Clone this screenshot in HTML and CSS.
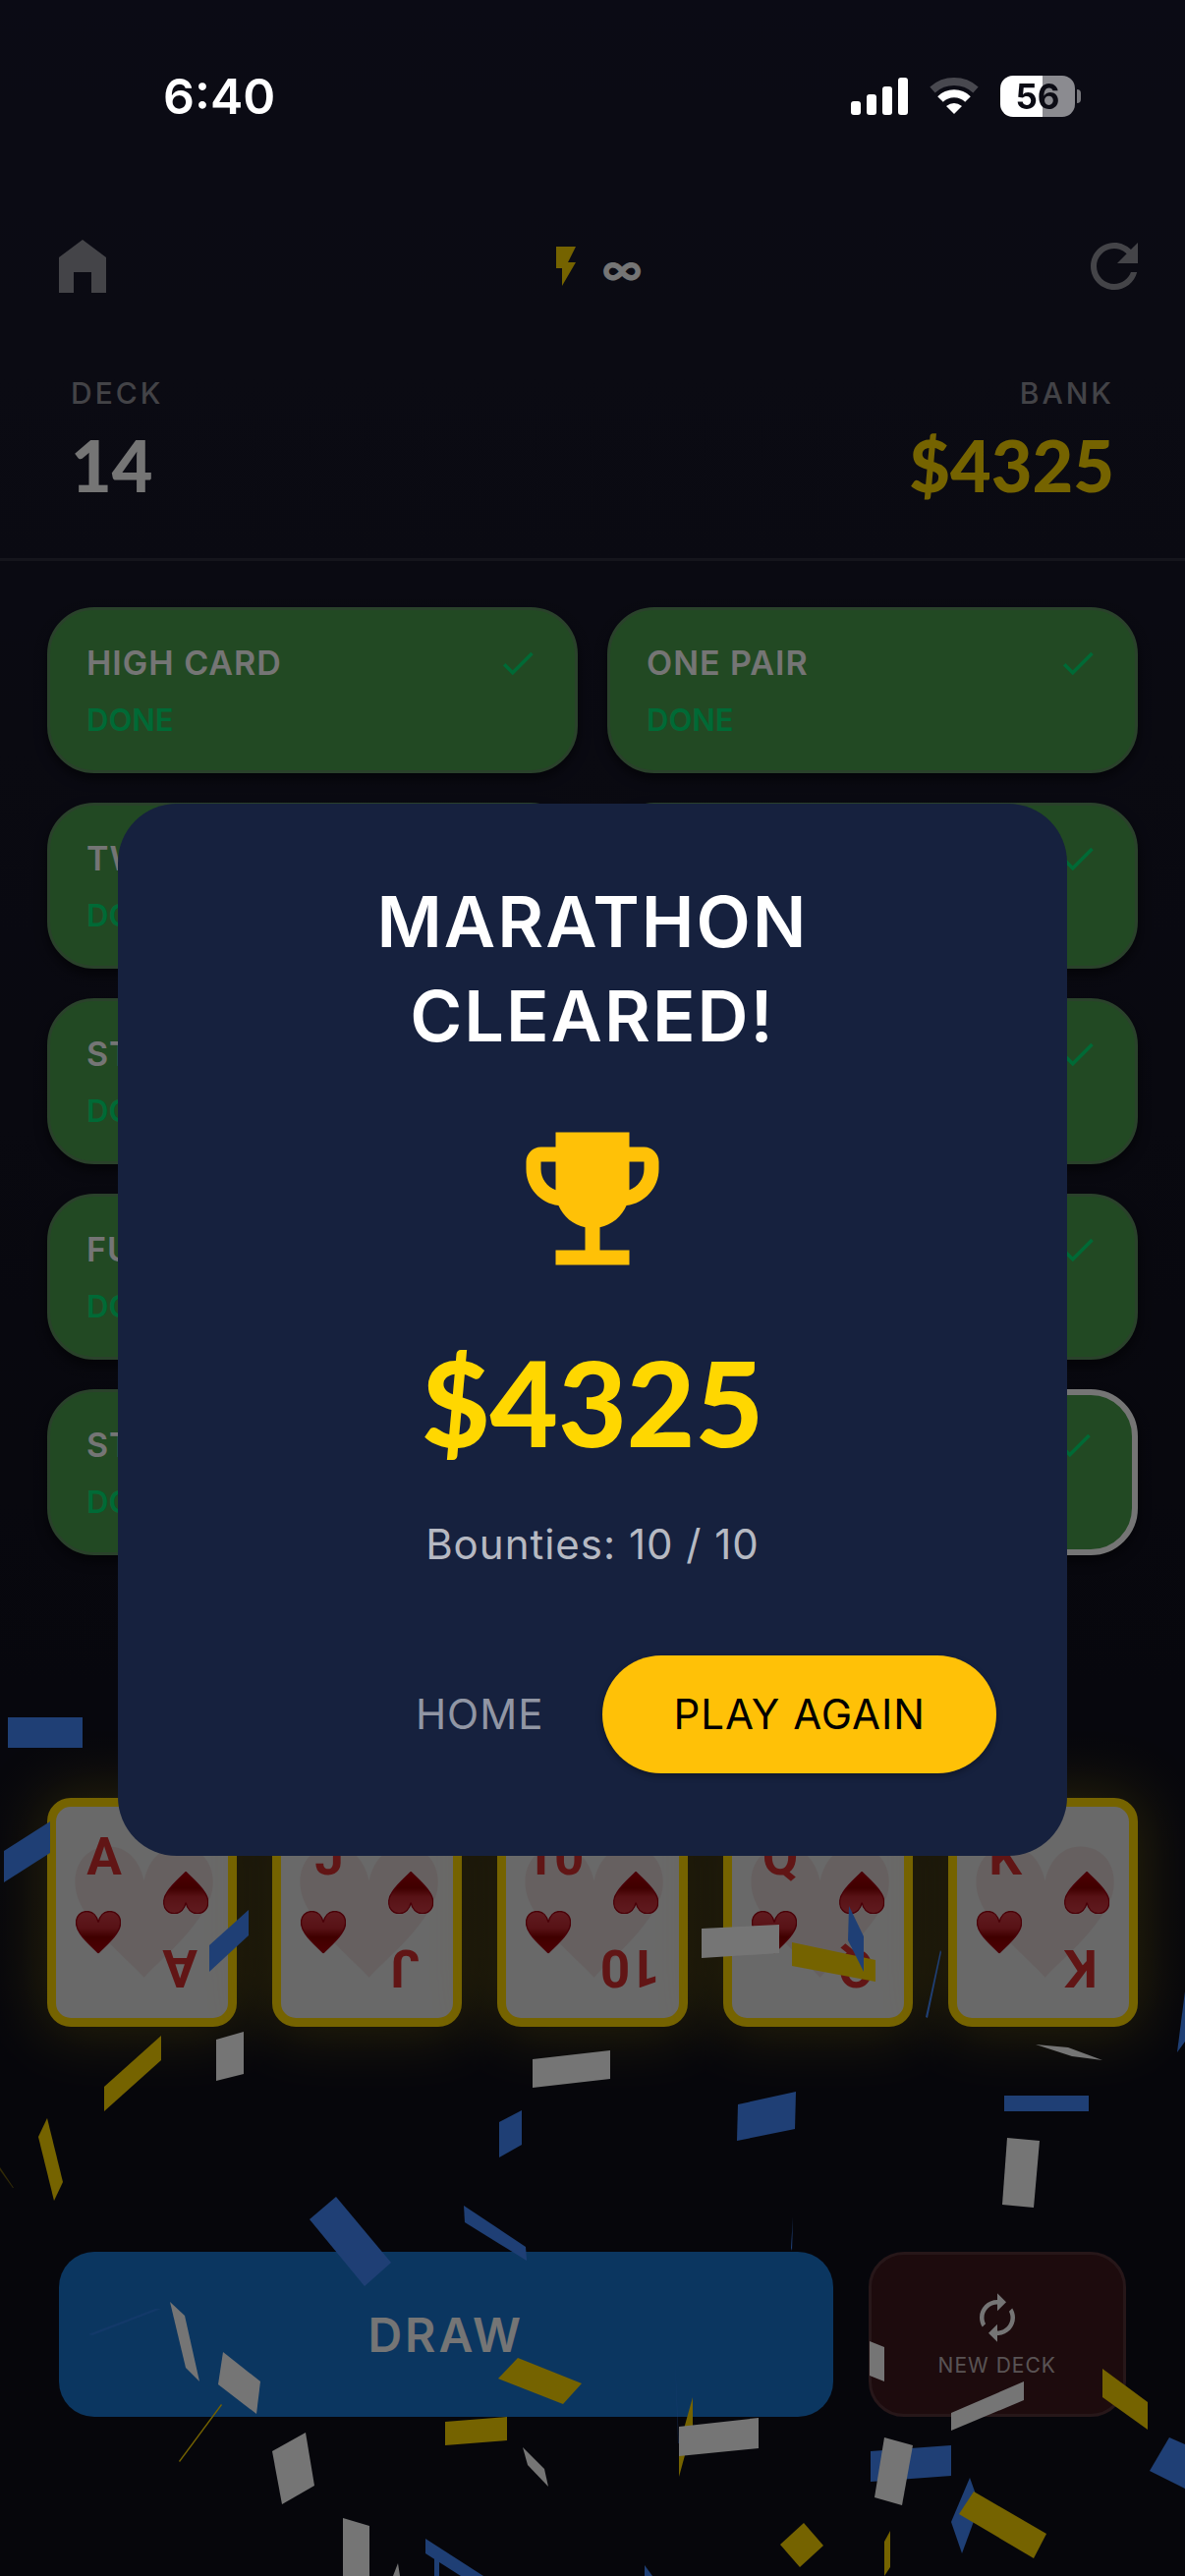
FILE: index.html
```html
<!DOCTYPE html>
<html lang="en">
<head>
    <meta charset="UTF-8">
    <meta name="viewport" content="width=device-width, initial-scale=1.0">
    <title>Poker Marathon</title>
    <link rel="stylesheet" href="styles.css">
</head>
<body>
    <!-- shared shapes -->
    <svg class="defs" width="0" height="0" aria-hidden="true">
        <defs>
            <linearGradient id="heartFill" x1="0" y1="0" x2="0" y2="1">
                <stop offset="0" stop-color="#d23c46"/>
                <stop offset="0.4" stop-color="#c02830"/>
                <stop offset="0.62" stop-color="#8c0000"/>
                <stop offset="1" stop-color="#a80008"/>
            </linearGradient>
            <symbol id="heart" viewBox="0 0 100 94" preserveAspectRatio="none">
                <path d="M50 93C40 82 22 68 10 50C3 40 1 33 1 26C1 11 11 1 25 1C38 1 47 11 50 25C53 11 62 1 75 1C89 1 99 11 99 26C99 33 97 40 90 50C78 68 60 82 50 93z"/>
            </symbol>
            <symbol id="check" viewBox="0 0 24 24">
                <path d="M9 16.17L4.83 12l-1.42 1.41L9 19 21 7l-1.41-1.41z"/>
            </symbol>
        </defs>
    </svg>

    <div class="status-bar">
        <span class="time">6:40</span>
        <div class="status-icons">
            <svg width="58" height="38" viewBox="0 0 58 38">
                <rect x="0" y="24" width="10" height="14" rx="3"/>
                <rect x="16" y="17" width="10" height="21" rx="3"/>
                <rect x="32" y="9" width="10" height="29" rx="3"/>
                <rect x="48" y="0" width="10" height="38" rx="3"/>
            </svg>
            <svg class="wifi" width="50" height="38" viewBox="0 0 50 38">
                <path class="wifi-weak" d="M3 12.500A33 33 0 0 1 47 12.500"/>
                <path d="M11 22A20 20 0 0 1 39 22"/>
                <path class="wifi-dot" d="M17 29Q25 23 33 29L25 37z"/>
            </svg>
            <div class="battery"><span class="battery-level">56</span></div>
        </div>
    </div>

    <div class="game">
        <header class="top-bar">
            <button class="icon-btn" aria-label="Home">
                <svg width="72" height="72" viewBox="0 0 24 24"><path d="M12 3L4 9v12h5v-7h6v7h5V9z"/></svg>
            </button>
            <div class="energy">
                <svg width="48" height="48" viewBox="0 0 24 24"><path d="M7 2v11h3v9l7-12h-4l4-8z"/></svg>
                <span>∞</span>
            </div>
            <button class="icon-btn" aria-label="Restart">
                <svg width="72" height="72" viewBox="0 0 24 24"><path d="M17.650 6.350C16.200 4.900 14.210 4 12 4c-4.420 0-7.990 3.580-7.990 8s3.570 8 7.990 8c3.730 0 6.840-2.550 7.730-6h-2.080c-.82 2.330-3.040 4-5.650 4-3.310 0-6-2.690-6-6s2.690-6 6-6c1.660 0 3.140.69 4.220 1.780L13 11h7V4l-2.350 2.350z"/></svg>
            </button>
        </header>

        <section class="stats">
            <div class="stat">
                <span class="stat-label">DECK</span>
                <span class="stat-value">14</span>
            </div>
            <div class="stat stat-right">
                <span class="stat-label">BANK</span>
                <span class="stat-value gold">$4325</span>
            </div>
        </section>

        <section class="bounties">
            <div class="bounty"><div class="bounty-top"><span>HIGH CARD</span><svg><use href="#check"/></svg></div><span class="done">DONE</span></div>
            <div class="bounty"><div class="bounty-top"><span>ONE PAIR</span><svg><use href="#check"/></svg></div><span class="done">DONE</span></div>
            <div class="bounty"><div class="bounty-top"><span>TWO PAIR</span><svg><use href="#check"/></svg></div><span class="done">DONE</span></div>
            <div class="bounty"><div class="bounty-top"><span></span><svg><use href="#check"/></svg></div><span class="done"></span></div>
            <div class="bounty"><div class="bounty-top"><span>STRAIGHT</span><svg><use href="#check"/></svg></div><span class="done">DONE</span></div>
            <div class="bounty"><div class="bounty-top"><span></span><svg><use href="#check"/></svg></div><span class="done"></span></div>
            <div class="bounty"><div class="bounty-top"><span>FULL HOUSE</span><svg><use href="#check"/></svg></div><span class="done">DONE</span></div>
            <div class="bounty"><div class="bounty-top"><span></span><svg><use href="#check"/></svg></div><span class="done"></span></div>
            <div class="bounty"><div class="bounty-top"><span>STR. FLUSH</span><svg><use href="#check"/></svg></div><span class="done">DONE</span></div>
            <div class="bounty current"><div class="bounty-top"><span></span><svg><use href="#check"/></svg></div><span class="done"></span></div>
        </section>

        <section class="table-area">
            <div class="hand" id="hand"></div>
        </section>

        <div class="actions">
            <button class="draw-btn">DRAW</button>
            <button class="deck-btn">
                <svg width="54" height="54" viewBox="0 0 24 24"><path d="M12 6v3l4-4-4-4v3c-4.420 0-8 3.580-8 8 0 1.570.46 3.030 1.240 4.260L6.700 14.800c-.45-.83-.7-1.790-.7-2.800 0-3.310 2.690-6 6-6zm6.760 1.740L17.300 9.200c.44.84.7 1.790.7 2.800 0 3.310-2.690 6-6 6v-3l-4 4 4 4v-3c4.420 0 8-3.580 8-8 0-1.570-.46-3.030-1.240-4.260z"/></svg>
                <span>NEW DECK</span>
            </button>
        </div>

        <!-- confetti -->
        <svg class="confetti" viewBox="0 0 1206 2622" preserveAspectRatio="xMidYMax slice" aria-hidden="true">
            <g class="blue">
                <path d="M8 1748H84V1779H8z"/>
                <path d="M4 1884L51 1854V1886L4 1916z"/>
                <path d="M213 1980L253 1944V1970L213 2007z"/>
                <path d="M508 2160L531 2148V2183L508 2196z"/>
                <path d="M342 2236L398 2303L371 2327L315 2259z"/>
                <path d="M472 2245L535 2287L536 2301L473 2262z"/>
                <path d="M433 2584L492 2622H469L433 2599z"/>
                <path d="M442 2603H447V2622H442z"/>
                <path d="M656 2611L664 2622H656z"/>
                <path d="M886 2495L968 2489V2520L886 2526z"/>
                <path d="M1190 2481L1206 2488V2533L1170 2515z"/>
                <path d="M987 2522L997 2550L979 2599L968 2567z"/>
                <path d="M957 1985L958 1987L944 2054L942 2053z"/>
                <path d="M751 2142L810 2129L809 2167L750 2179z"/>
                <path d="M1022 2133H1108V2149H1022z"/>
                <path d="M1206 2027L1198 2089L1206 2078z"/>
                <path d="M807 2257L806 2291L805 2288z"/>
                <path class="faint" d="M90 2376L158 2350H164L94 2377z"/>
                <path class="faint" d="M687 2400L691 2487L690 2487z"/>
            </g>
            <g class="yellow">
                <path d="M106 2124L164 2072V2097L106 2149z"/>
                <path d="M39 2175L48 2156L64 2221L55 2240z"/>
                <path d="M225 2447L226 2448L183 2506L182 2505z"/>
                <path d="M527 2400L592 2426L573 2447L507 2421z"/>
                <path d="M453 2465L516 2460V2484L453 2489z"/>
                <path d="M1122 2411L1168 2445V2473L1122 2440z"/>
                <path d="M705 2440V2470L691 2521V2490z"/>
                <path d="M806 1977L891 1995V2017L806 2001z"/>
                <path d="M991 2536L1065 2579L1052 2604L976 2559z"/>
                <path d="M818 2568L838 2591L814 2613L794 2590z"/>
                <path d="M906 2576V2613L900 2622V2587z"/>
                <path class="faint" d="M0 2206L14 2227L13 2227L0 2209z"/>
            </g>
            <path class="blue" d="M864 1940L879 1971V2007L863 1975z"/>
            <g class="white">
                <path d="M220 2076L248 2068V2111L220 2118z"/>
                <path d="M542 2096L621 2087V2116L542 2125z"/>
                <path d="M173 2343L188 2357L203 2424L189 2410z"/>
                <path d="M227 2394L265 2424L261 2457L222 2427z"/>
                <path d="M277 2495L311 2476L320 2530L287 2549z"/>
                <path d="M532 2491L554 2513L558 2531L537 2509z"/>
                <path d="M349 2563L376 2571V2622H349z"/>
                <path d="M405 2609L400 2622H407z"/>
                <path d="M1025 2176L1058 2179L1052 2247L1020 2244z"/>
                <path d="M885 2383L900 2389V2424L885 2418z"/>
                <path d="M968 2456L1042 2424V2443L968 2474z"/>
                <path d="M691 2470L772 2461V2492L691 2500z"/>
                <path d="M900 2481L929 2489L918 2550L890 2542z"/>
                <path d="M714 1963L793 1959V1988L714 1993z"/>
                <path d="M1054 2081L1087 2084L1122 2097L1091 2093z"/>
            </g>
        </svg>
    </div>

    <div class="backdrop">
        <div class="dialog" role="dialog" aria-labelledby="dialogTitle">
            <h1 id="dialogTitle">MARATHON<br>CLEARED!</h1>
            <svg class="trophy" width="180" height="180" viewBox="0 0 24 24"><path d="M19 5h-2V3H7v2H5c-1.100 0-2 .9-2 2v1c0 2.550 1.920 4.630 4.390 4.940.63 1.500 1.980 2.630 3.610 2.960V19H7v2h10v-2h-4v-3.100c1.630-.33 2.980-1.460 3.610-2.960C19.080 12.630 21 10.550 21 8V7c0-1.100-.9-2-2-2zM5 8V7h2v3.820C5.840 10.400 5 9.300 5 8zm14 0c0 1.300-.84 2.400-2 2.820V7h2v1z"/></svg>
            <p class="amount">$4325</p>
            <p class="summary">Bounties: 10 / 10</p>
            <div class="dialog-actions">
                <button class="home-btn">HOME</button>
                <button class="play-btn">PLAY AGAIN</button>
            </div>
        </div>
    </div>

    <script src="script.js"></script>
</body>
</html>
```

FILE: styles.css
```css
* {
    box-sizing: border-box;
}
body {
    margin: 0;
    background: #0f0f1a;
    color: #fff;
    font-family: Inter, "Open Sans", sans-serif;
}
button {
    border: none;
    margin: 0;
    padding: 0;
    background: none;
    color: inherit;
    font-family: inherit;
    cursor: pointer;
}
svg {
    display: block;
    fill: currentColor;
}
.defs {
    position: absolute;
}

/* status bar stays above the backdrop */
.status-bar {
    position: absolute;
    top: 0;
    left: 0;
    right: 0;
    z-index: 20;
    display: flex;
    justify-content: space-between;
    align-items: center;
    height: 196px;
    padding: 0 112px 0 166px;
}
.time {
    font-size: 50px;
    font-weight: 600;
}
.status-icons {
    display: flex;
    align-items: center;
    gap: 22px;
}
.wifi {
    fill: none;
    stroke: #fff;
    stroke-width: 8px;
}
.wifi-weak {
    opacity: 0.25;
}
.wifi-dot {
    fill: #fff;
    stroke: none;
}
.battery {
    position: relative;
    width: 76px;
    height: 42px;
    border-radius: 13px;
    background: linear-gradient(90deg, #fff 56%, #8b8b90 56%);
    color: #0b0b14;
    text-align: center;
}
.battery::after {
    content: "";
    position: absolute;
    left: 78px;
    top: 14px;
    width: 4px;
    height: 14px;
    border-radius: 0 4px 4px 0;
    background: #77777c;
}
.battery-level {
    font-size: 35px;
    line-height: 42px;
    font-weight: 700;
}

.game {
    position: relative;
    display: flex;
    flex-direction: column;
    min-height: 100vh;
    padding: 186px 0 162px;
    overflow: hidden;
    background: linear-gradient(#1a1a2e, #0f0f1a 80%);
}

.top-bar {
    display: flex;
    justify-content: space-between;
    align-items: center;
    height: 170px;
    padding: 0 0 0 12px;
}
.icon-btn {
    display: flex;
    justify-content: center;
    align-items: center;
    width: 144px;
    height: 144px;
    color: rgba(255, 255, 255, 0.54);
}
.energy {
    display: flex;
    align-items: center;
    gap: 12px;
    margin-right: 12px;
    color: #ffd700;
}
.energy span {
    padding-top: 6px;
    color: #fff;
    font-size: 42px;
    font-weight: 700;
    line-height: 48px;
}

.stats {
    display: flex;
    justify-content: space-between;
    padding: 24px 72px 51px;
    border-bottom: 3px solid rgba(255, 255, 255, 0.1);
}
.stat {
    display: flex;
    flex-direction: column;
    gap: 9px;
}
.stat-right {
    align-items: flex-end;
}
.stat-label {
    color: rgba(255, 255, 255, 0.54);
    font-size: 30px;
    line-height: 40px;
    font-weight: 500;
    letter-spacing: 3px;
}
.stat-value {
    font-family: Lato, sans-serif;
    font-size: 72px;
    line-height: 88px;
    font-weight: 900;
}
.gold {
    color: #ffd700;
}

.bounties {
    display: grid;
    grid-template-columns: 1fr 1fr;
    gap: 30px;
    padding: 47px 48px 0;
}
.bounty {
    display: flex;
    flex-direction: column;
    justify-content: center;
    gap: 18px;
    height: 169px;
    padding: 0 37px;
    border: 3px solid #5c8f5e;
    border-radius: 48px;
    background: #4a9f4c;
    box-shadow: 0 6px 12px rgba(0, 0, 0, 0.5);
}
.bounty-top {
    display: flex;
    justify-content: space-between;
    align-items: center;
    font-size: 34px;
    line-height: 42px;
    font-weight: 600;
    letter-spacing: 1px;
}
.bounty-top svg {
    width: 42px;
    height: 42px;
    color: #00e676;
}
.done {
    min-height: 38px;
    color: #00e676;
    font-size: 31px;
    line-height: 38px;
    font-weight: 600;
}
.current {
    border: 6px solid #fff;
}

.table-area {
    flex: 1;
    display: flex;
    flex-direction: column;
    justify-content: center;
    padding: 18px 48px 0;
}
.hand {
    display: flex;
    gap: 36px;
}
.card {
    flex: 1;
    border: 9px solid #ffd700;
    border-radius: 24px;
    background: #e4e4e4;
    box-shadow: 0 0 60px 6px rgba(255, 215, 0, 0.3);
}
.card svg {
    width: 100%;
    height: auto;
    border-radius: 15px;
}
.rank {
    fill: #d32f2f;
    font-family: Roboto, sans-serif;
    font-size: 53px;
    font-weight: 700;
    text-anchor: middle;
}
.pip {
    fill: url(#heartFill);
    stroke: #a00010;
    stroke-width: 3px;
}
.watermark {
    fill: #c06a6a;
    opacity: 0.14;
}

.actions {
    display: grid;
    grid-template-columns: 3fr 1fr;
    gap: 36px;
    padding: 0 60px;
}
.draw-btn {
    height: 168px;
    border-radius: 36px;
    background: #1976d2;
    font-size: 48px;
    font-weight: 600;
    letter-spacing: 3px;
}
.deck-btn {
    display: flex;
    flex-direction: column;
    align-items: center;
    justify-content: center;
    gap: 9px;
    height: 168px;
    border: 3px solid #553238;
    border-radius: 36px;
    background: #3f181d;
}
.deck-btn span {
    color: rgba(255, 255, 255, 0.7);
    font-size: 21px;
    line-height: 26px;
    letter-spacing: 1px;
}

.confetti {
    position: absolute;
    inset: 0;
    width: 100%;
    height: 100%;
    pointer-events: none;
}
.blue {
    fill: #448aff;
}
.yellow {
    fill: #ffd700;
}
.white {
    fill: #fff;
}
.faint {
    opacity: 0.4;
}

.backdrop {
    position: fixed;
    inset: 0;
    z-index: 10;
    display: flex;
    flex-direction: column;
    justify-content: center;
    padding: 186px 120px 102px;
    background: rgba(0, 0, 0, 0.54);
}
.dialog {
    display: flex;
    flex-direction: column;
    align-items: center;
    padding: 72px 72px 84px;
    border-radius: 60px;
    background: #16213e;
}
.dialog h1 {
    margin: 0 0 48px;
    font-size: 72px;
    line-height: 96px;
    font-weight: 600;
    letter-spacing: 2px;
    text-align: center;
}
.trophy {
    color: #ffc107;
}
.amount {
    margin: 44px 0 46px;
    color: #ffd700;
    font-family: Lato, sans-serif;
    font-size: 120px;
    line-height: 146px;
    font-weight: 900;
}
.summary {
    margin: 0 0 87px;
    color: rgba(255, 255, 255, 0.7);
    font-size: 42px;
    line-height: 52px;
    letter-spacing: 1px;
}
.dialog-actions {
    display: flex;
    align-self: flex-end;
    gap: 24px;
}
.home-btn, .play-btn {
    height: 120px;
    border-radius: 60px;
    font-size: 42px;
    letter-spacing: 1px;
}
.home-btn {
    padding: 0 36px;
    color: rgba(255, 255, 255, 0.54);
}
.play-btn {
    padding: 0 72px;
    background: #ffc107;
    color: #000;
    box-shadow: 0 3px 6px rgba(0, 0, 0, 0.3);
}
```

FILE: script.js
```javascript
const hand = document.getElementById("hand");

// one half of the face, the other half is the same turned by 180 degrees
function corner(rank) {
    return `
        <text class="rank" x="49" y="69">${rank}</text>
        <use class="pip" href="#heart" x="20" y="106" width="46" height="43"/>`;
}

["A", "J", "10", "Q", "K"].forEach(rank => {
    const card = document.createElement("div");
    card.className = "card";
    card.innerHTML = `
        <svg viewBox="0 0 175 215">
            <use class="watermark" href="#heart" x="18" y="39" width="143" height="136"/>
            <g>${corner(rank)}</g>
            <g transform="rotate(180 87.5 107.5)">${corner(rank)}</g>
        </svg>`;
    hand.appendChild(card);
});
```
